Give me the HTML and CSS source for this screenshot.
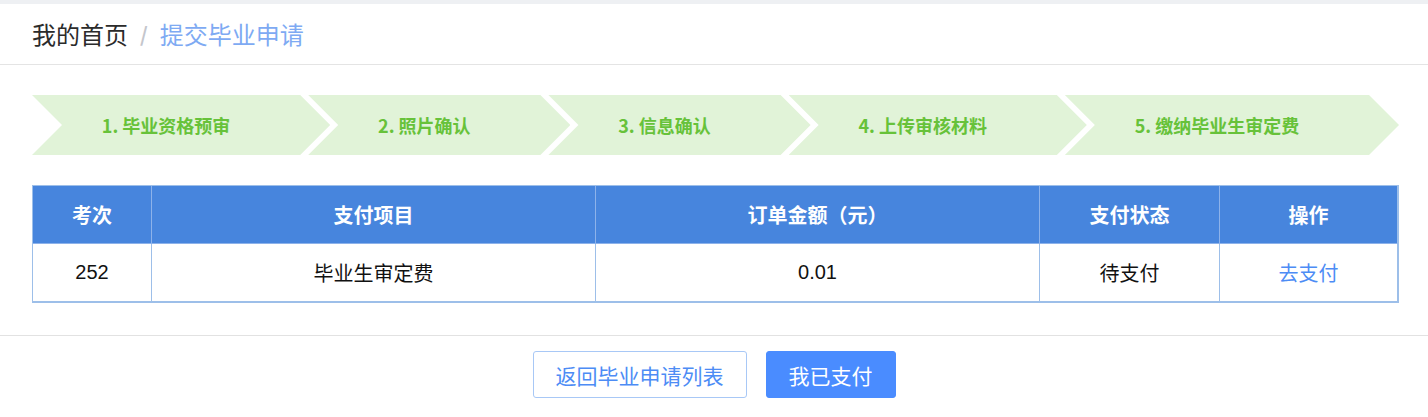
FILE: index.html
```html
<!DOCTYPE html>
<html lang="zh-CN">
<head>
<meta charset="utf-8">
<title>提交毕业申请</title>
<link rel="stylesheet" href="styles.css">
</head>
<body>
<div class="topbar"></div>
<header class="crumbs">
  <span class="crumb-home">我的首页</span>
  <span class="crumb-sep">/</span>
  <span class="crumb-current">提交毕业申请</span>
</header>
<main class="content">
  <ol class="steps">
    <li class="step">1. 毕业资格预审</li>
    <li class="step">2. 照片确认</li>
    <li class="step">3. 信息确认</li>
    <li class="step">4. 上传审核材料</li>
    <li class="step">5. 缴纳毕业生审定费</li>
  </ol>
  <table class="pay-table">
    <thead>
      <tr>
        <th class="col-term">考次</th>
        <th class="col-item">支付项目</th>
        <th class="col-amount">订单金额（元）</th>
        <th class="col-status">支付状态</th>
        <th class="col-op">操作</th>
      </tr>
    </thead>
    <tbody>
      <tr>
        <td>252</td>
        <td>毕业生审定费</td>
        <td>0.01</td>
        <td>待支付</td>
        <td><a class="pay-link" href="#">去支付</a></td>
      </tr>
    </tbody>
  </table>
</main>
<footer class="actions">
  <button class="btn btn-plain">返回毕业申请列表</button>
  <button class="btn btn-primary">我已支付</button>
</footer>
</body>
</html>
```

FILE: styles.css
```css
* { box-sizing: border-box; }
html, body { margin: 0; padding: 0; background: #fff; }
body {
  font-family: "Liberation Sans", "Noto Sans CJK SC", sans-serif;
  color: #222;
}
.topbar { height: 4px; background: #eef0f3; }
.crumbs {
  height: 61px;
  display: flex;
  align-items: center;
  padding: 0 32px 2px;
  border-bottom: 1px solid #e4e4e4;
  font-family: "Noto Sans CJK SC", sans-serif;
  font-size: 24px;
}
.crumb-home { color: #2b2b2b; }
.crumb-sep { color: #c4c6cc; font-weight: 700; margin: 0 12px 0 12px; font-size: 20px; }
.crumb-current { color: #7eaaf3; }

.content { padding: 30px 29px 32px 32px; }

.steps {
  list-style: none;
  margin: 0 0 30px;
  padding: 0;
  display: flex;
}
.step {
  flex: 1 1 auto;
  height: 60px;
  display: flex;
  align-items: center;
  justify-content: center;
  padding: 0 20px 0 20px;
  padding-right: 50px;
  margin-left: -22px;
  background: #e1f3d8;
  color: #67c23a;
  font-family: "Noto Sans CJK SC", sans-serif;
  font-weight: 700;
  font-size: 18px;
  clip-path: polygon(0 0, calc(100% - 30px) 0, 100% 50%, calc(100% - 30px) 100%, 0 100%, 30px 50%);
}
.step:first-child { margin-left: 0; }

.pay-table {
  width: 100%;
  border-collapse: separate;
  border-spacing: 0;
  border: 1px solid #9dbfe9;
  table-layout: fixed;
  font-size: 20px;
}
.pay-table th, .pay-table td {
  border-right: 1px solid #9dbfe9;
  border-bottom: 1px solid #9dbfe9;
  text-align: center;
  height: 58px;
  padding: 0;
}
.pay-table th {
  background: #4785dd;
  color: #fff;
  font-family: "Noto Sans CJK SC", sans-serif;
  font-weight: 700;
  border-right-color: #8db2ea;
  border-bottom-color: #8db2ea;
}
.pay-table th:last-child { border-right-color: #9dbfe9; }
.pay-table td { color: #111; }
.col-term { width: 119px; }
.col-item { width: 444px; }
.col-amount { width: 444px; }
.col-status { width: 180px; }
.pay-link { color: #4d8cf5; text-decoration: none; }

.actions {
  border-top: 1px solid #e2e2e2;
  display: flex;
  justify-content: center;
  gap: 19px;
  padding-top: 15px;
}
.btn {
  height: 47px;
  border-radius: 3px;
  font-family: "Noto Sans CJK SC", sans-serif;
  font-size: 21px;
  padding: 0 22px;
  cursor: pointer;
}
.btn-plain {
  background: #fff;
  border: 1px solid #a8c8f6;
  color: #4d8cf5;
}
.btn-primary {
  background: #4a8cff;
  border: 1px solid #4a8cff;
  color: #fff;
}
```
